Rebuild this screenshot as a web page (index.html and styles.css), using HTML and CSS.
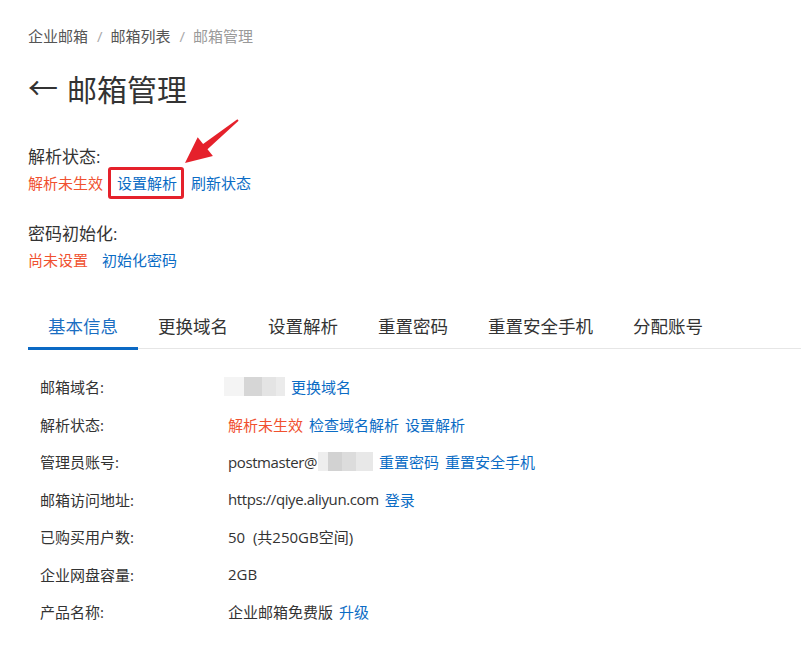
FILE: index.html
```html
<!DOCTYPE html>
<html lang="zh-CN">
<head>
<meta charset="utf-8">
<title>邮箱管理</title>
<link rel="stylesheet" href="styles.css">
</head>
<body>
<div class="page">
  <nav class="crumbs">
    <span class="crumb">企业邮箱</span><span class="sep">/</span><span class="crumb">邮箱列表</span><span class="sep">/</span><span class="crumb current">邮箱管理</span>
  </nav>
  <h1 class="title"><span class="back">&#8592;</span>邮箱管理</h1>

  <div class="block first">
    <div class="block-label">解析状态:</div>
    <div class="block-row">
      <span class="warn">解析未生效</span>
      <span class="link boxed">设置解析</span>
      <span class="link">刷新状态</span>
    </div>
  </div>

  <div class="block second">
    <div class="block-label">密码初始化:</div>
    <div class="block-row tight">
      <span class="warn">尚未设置</span>
      <span class="link">初始化密码</span>
    </div>
  </div>

  <div class="tabs">
    <div class="tab active">基本信息</div>
    <div class="tab">更换域名</div>
    <div class="tab">设置解析</div>
    <div class="tab">重置密码</div>
    <div class="tab">重置安全手机</div>
    <div class="tab">分配账号</div>
  </div>

  <div class="info">
    <div class="row"><div class="label">邮箱域名:</div><div class="value"><span class="blur blur-domain"></span><span class="link">更换域名</span></div></div>
    <div class="row"><div class="label">解析状态:</div><div class="value"><span class="warn">解析未生效</span><span class="link">检查域名解析</span><span class="link">设置解析</span></div></div>
    <div class="row"><div class="label">管理员账号:</div><div class="value"><span class="plain latin">postmaster@</span><span class="blur blur-user"></span><span class="link">重置密码</span><span class="link">重置安全手机</span></div></div>
    <div class="row"><div class="label">邮箱访问地址:</div><div class="value"><span class="plain latin">https://qiye.aliyun.com</span><span class="link">登录</span></div></div>
    <div class="row"><div class="label">已购买用户数:</div><div class="value"><span class="plain">50&nbsp;&nbsp;(共250GB空间)</span></div></div>
    <div class="row"><div class="label">企业网盘容量:</div><div class="value"><span class="plain">2GB</span></div></div>
    <div class="row"><div class="label">产品名称:</div><div class="value"><span class="plain">企业邮箱免费版</span><span class="link">升级</span></div></div>
  </div>
</div>

<svg class="annot-arrow" width="801" height="659" viewBox="0 0 801 659" aria-hidden="true">
  <polygon points="185,163 212.9,155.9 207.5,149.3 238.6,120.8 237.4,119.2 203.1,143.9 197.7,137.3" fill="#e5212b"/>
</svg>
</body>
</html>
```
FILE: styles.css
```css
html, body {
  margin: 0;
  padding: 0;
  background: #ffffff;
}
body {
  font-family: "Open Sans", "Noto Sans CJK SC", sans-serif;
  color: #333333;
  position: relative;
  width: 801px;
  height: 659px;
  overflow: hidden;
}
.page {
  padding: 25px 0 0 28px;
}
.crumbs {
  font-size: 15px;
  line-height: 22px;
  color: #555555;
  display: flex;
  align-items: center;
}
.sep {
  color: #aaaaaa;
  margin: 0 8px 0 9px;
}
.crumb.current {
  color: #9a9a9a;
}
.title {
  margin: 23px 0 0 0;
  font-size: 30px;
  line-height: 40px;
  font-weight: normal;
  color: #333333;
  display: flex;
  align-items: center;
}
.back {
  font-size: 30px;
  margin-right: 9px;
  margin-left: 0;
  position: relative;
  top: -2px;
}
.block.first {
  margin-top: 35px;
}
.block.second {
  margin-top: 27px;
}
.block-label {
  font-size: 17px;
  line-height: 24px;
  color: #333333;
}
.block-row {
  margin-top: 2px;
  font-size: 15px;
  line-height: 24px;
  display: flex;
  gap: 14px;
}
.warn {
  color: #f0512f;
}
.link {
  color: #0b6cc5;
}
.boxed {
  position: relative;
}
.boxed::after {
  content: "";
  position: absolute;
  top: -4px;
  bottom: -4px;
  left: -9px;
  right: -7px;
  border: 3px solid #e5212b;
  border-radius: 3px;
}
.tabs {
  margin-top: 42px;
  display: flex;
  border-bottom: 1px solid #e6e6e6;
  font-size: 17.5px;
  line-height: 24px;
}
.tab {
  padding: 0 20px 9px;
  border-bottom: 3px solid transparent;
  margin-bottom: -2px;
  color: #333333;
}
.tab.active {
  color: #1a6ec2;
  border-bottom-color: #0b69c4;
}
.info {
  margin-top: 19px;
  padding-left: 12px;
  font-size: 15px;
}
.row {
  height: 37.5px;
  display: flex;
  align-items: center;
}
.label {
  width: 188px;
  flex: none;
}
.value {
  display: flex;
  align-items: center;
  gap: 6px;
}
.latin {
  letter-spacing: -0.4px;
}
.blur {
  display: inline-block;
  height: 19px;
}
.blur-domain {
  width: 61px;
  margin-left: -4px;
  background: linear-gradient(90deg, #f4f4f4 0 20px, #d6d6d6 20px 38px, #e4e4e4 38px 52px, #ebebeb 52px 61px);
}
.blur-user {
  width: 55px;
  margin-left: -5px;
  background: linear-gradient(90deg, #eeeeee 0 10px, #d2d2d2 10px 24px, #dcdcdc 24px 38px, #e8e8e8 38px 55px);
}
.annot-arrow {
  position: absolute;
  left: 0;
  top: 0;
  pointer-events: none;
}
```
